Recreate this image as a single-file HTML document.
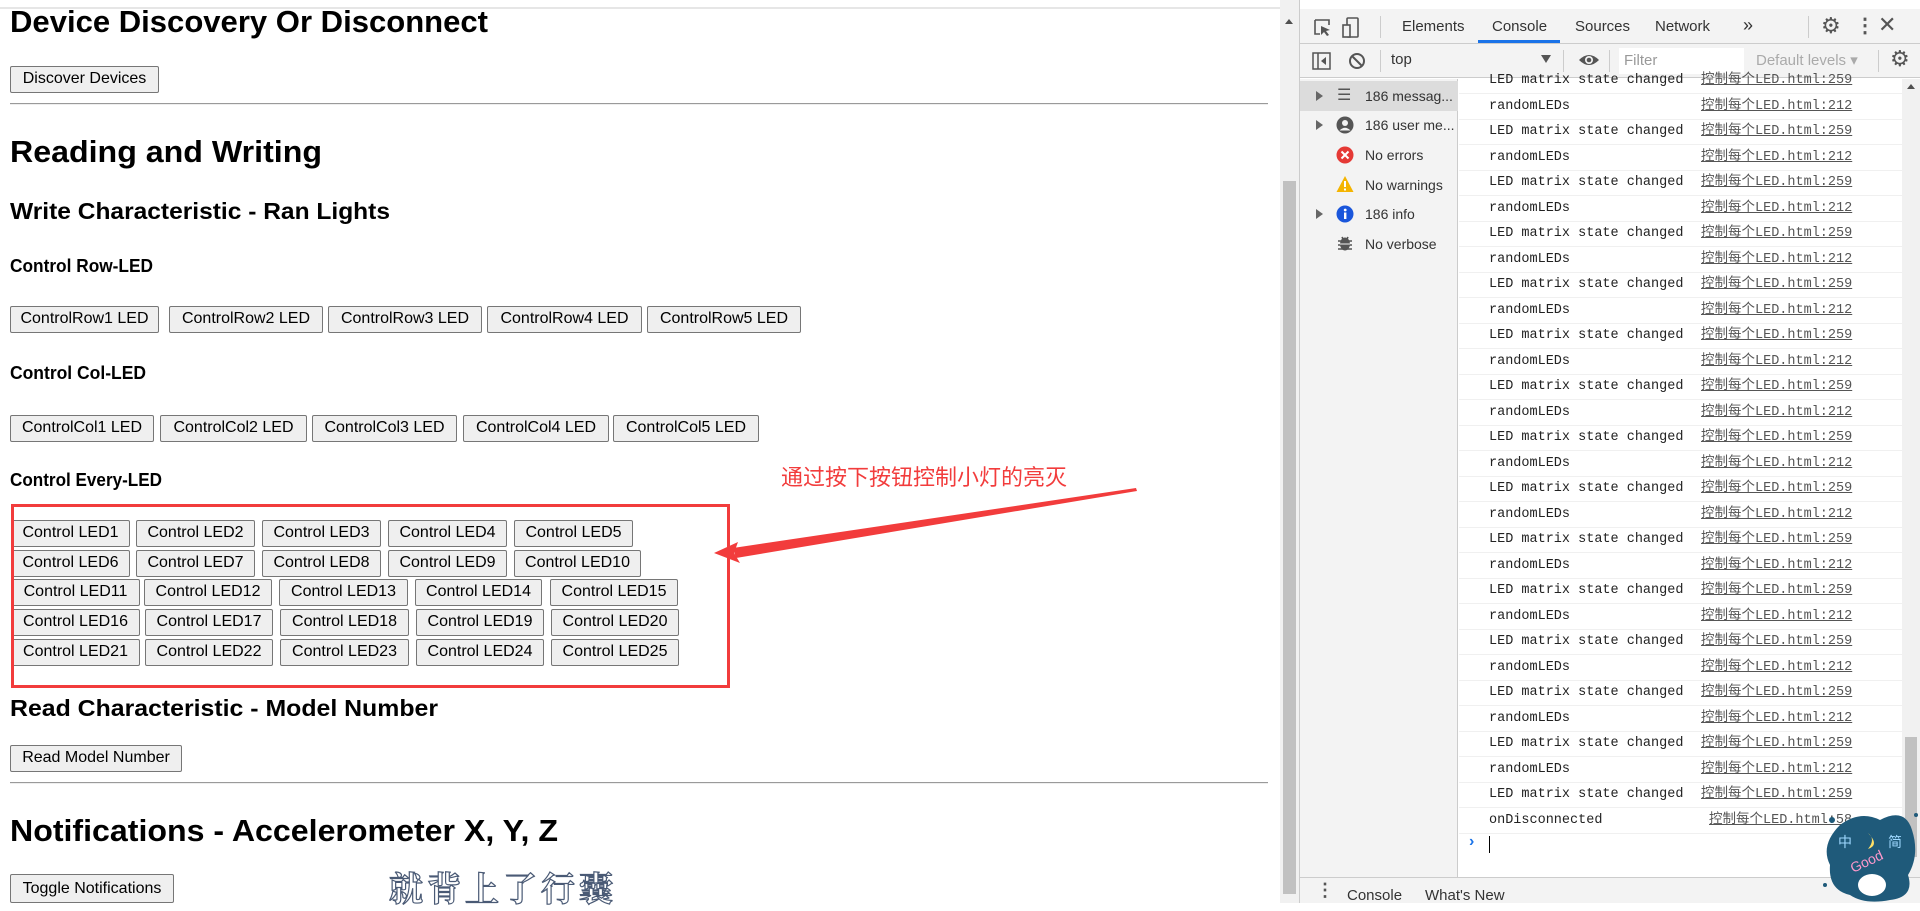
<!DOCTYPE html>
<html><head><meta charset="utf-8">
<style>
*{box-sizing:border-box;margin:0;padding:0}
body{width:1920px;height:903px;overflow:hidden;background:#fff;position:relative;font-family:"Liberation Sans",Arial,sans-serif;color:#000}
.a{position:absolute;white-space:nowrap}
.h{font-weight:bold;transform-origin:0 50%;line-height:1}
.b{position:absolute;background:#efefef;border:1px solid #767676;border-radius:2px;font-size:16px;text-align:center;line-height:24px;white-space:nowrap;overflow:hidden;color:#000}
.hr{position:absolute;left:10px;width:1258px;height:2px;background:#9a9a9a;border-bottom:1px solid #eee}
.dt{font-family:"Liberation Sans",sans-serif;font-size:15px;color:#333}
.row{position:absolute;left:1459px;width:443px;height:25.5px;border-bottom:1px solid #f0f0f0;font-family:"Liberation Mono",monospace;font-size:13.5px;color:#222;line-height:25px}
.row .m{position:absolute;left:30px;top:0}
.row .l{position:absolute;left:242px;top:0;text-decoration:underline;color:#555;font-family:"Liberation Mono","Noto Sans CJK SC",monospace}
.si{position:absolute;left:1300px;width:158px;height:30px;font-size:14px;color:#333;white-space:nowrap;overflow:hidden}
.si .t{position:absolute;left:65px;top:7px;width:90px;overflow:hidden;text-overflow:ellipsis}
.si .tri{position:absolute;left:16px;top:10px;width:0;height:0;border-left:7px solid #666;border-top:5px solid transparent;border-bottom:5px solid transparent}
</style></head><body>
<div class="a" style="left:0;top:0;width:1280px;height:9px;background:#fff;border-bottom:2px solid #e6e6e6"></div>

<div class="a h" id="t1" style="left:10px;top:6px;font-size:31px">Device Discovery Or Disconnect</div>
<div class="b" style="left:10px;top:66px;width:149px;height:27px">Discover Devices</div>
<div class="hr" style="top:103px"></div>
<div class="a h" id="t2" style="left:10px;top:136px;font-size:31px">Reading and Writing</div>
<div class="a h" id="t3" style="left:10px;top:200px;font-size:23px">Write Characteristic - Ran Lights</div>
<div class="a h" id="t4" style="left:10px;top:257px;font-size:18px">Control Row-LED</div>
<div class="b" style="left:10px;top:306px;width:149px;height:27px">ControlRow1 LED</div>
<div class="b" style="left:169px;top:306px;width:154px;height:27px">ControlRow2 LED</div>
<div class="b" style="left:328px;top:306px;width:154px;height:27px">ControlRow3 LED</div>
<div class="b" style="left:487px;top:306px;width:155px;height:27px">ControlRow4 LED</div>
<div class="b" style="left:647px;top:306px;width:154px;height:27px">ControlRow5 LED</div>
<div class="a h" id="t5" style="left:10px;top:364px;font-size:18px">Control Col-LED</div>
<div class="b" style="left:10px;top:415px;width:144px;height:27px">ControlCol1 LED</div>
<div class="b" style="left:160px;top:415px;width:147px;height:27px">ControlCol2 LED</div>
<div class="b" style="left:312px;top:415px;width:145px;height:27px">ControlCol3 LED</div>
<div class="b" style="left:463px;top:415px;width:146px;height:27px">ControlCol4 LED</div>
<div class="b" style="left:613px;top:415px;width:146px;height:27px">ControlCol5 LED</div>
<div class="a h" id="t6" style="left:10px;top:471px;font-size:18px">Control Every-LED</div>

<div class="b" style="left:11px;top:520px;width:119px;height:27px">Control LED1</div>
<div class="b" style="left:136px;top:520px;width:119px;height:27px">Control LED2</div>
<div class="b" style="left:262px;top:520px;width:119px;height:27px">Control LED3</div>
<div class="b" style="left:388px;top:520px;width:119px;height:27px">Control LED4</div>
<div class="b" style="left:514px;top:520px;width:119px;height:27px">Control LED5</div>
<div class="b" style="left:11px;top:550px;width:119px;height:27px">Control LED6</div>
<div class="b" style="left:136px;top:550px;width:119px;height:27px">Control LED7</div>
<div class="b" style="left:262px;top:550px;width:119px;height:27px">Control LED8</div>
<div class="b" style="left:388px;top:550px;width:119px;height:27px">Control LED9</div>
<div class="b" style="left:514px;top:550px;width:127px;height:27px">Control LED10</div>
<div class="b" style="left:11px;top:579px;width:129px;height:27px">Control LED11</div>
<div class="b" style="left:144px;top:579px;width:128px;height:27px">Control LED12</div>
<div class="b" style="left:279px;top:579px;width:129px;height:27px">Control LED13</div>
<div class="b" style="left:415px;top:579px;width:127px;height:27px">Control LED14</div>
<div class="b" style="left:550px;top:579px;width:128px;height:27px">Control LED15</div>
<div class="b" style="left:11px;top:609px;width:129px;height:27px">Control LED16</div>
<div class="b" style="left:145px;top:609px;width:128px;height:27px">Control LED17</div>
<div class="b" style="left:280px;top:609px;width:129px;height:27px">Control LED18</div>
<div class="b" style="left:416px;top:609px;width:128px;height:27px">Control LED19</div>
<div class="b" style="left:551px;top:609px;width:128px;height:27px">Control LED20</div>
<div class="b" style="left:11px;top:639px;width:129px;height:27px">Control LED21</div>
<div class="b" style="left:145px;top:639px;width:128px;height:27px">Control LED22</div>
<div class="b" style="left:280px;top:639px;width:129px;height:27px">Control LED23</div>
<div class="b" style="left:416px;top:639px;width:128px;height:27px">Control LED24</div>
<div class="b" style="left:551px;top:639px;width:128px;height:27px">Control LED25</div>
<div class="a" style="left:11px;top:504px;width:719px;height:184px;border:3px solid #f23c3c"></div>

<div class="a" style="left:781px;top:460px;font-size:22px;color:#f23c3c;font-family:'Liberation Sans','Noto Sans CJK SC',sans-serif">通过按下按钮控制小灯的亮灭</div>
<svg class="a" style="left:0;top:0" width="1280" height="903"><polygon points="1136,488 1137,491 736,558 733,548" fill="#f23c3c"/><polygon points="714,553 738,542 734,553 740,563" fill="#f23c3c"/></svg>

<div class="a h" id="t7" style="left:10px;top:697px;font-size:23px">Read Characteristic - Model Number</div>
<div class="b" style="left:10px;top:745px;width:172px;height:27px">Read Model Number</div>
<div class="hr" style="top:782px"></div>
<div class="a h" id="t8" style="left:10px;top:815px;font-size:31px">Notifications - Accelerometer X, Y, Z</div>
<div class="b" style="left:10px;top:874px;width:164px;height:29px;line-height:27px">Toggle Notifications</div>
<div class="a" style="left:389px;top:862px;font-size:34px;letter-spacing:4px;color:#fff;-webkit-text-stroke:1.2px #4a5a75;font-family:'Noto Serif CJK SC','Noto Sans CJK SC',serif;font-weight:bold">就背上了行囊</div>

<div class="a" style="left:1280px;top:0;width:19px;height:903px;background:#f1f1f1"></div>
<div class="a" style="left:1283px;top:181px;width:13px;height:713px;background:#c1c1c1"></div>
<div class="a" style="left:1285px;top:19px;border-left:4px solid transparent;border-right:4px solid transparent;border-bottom:5px solid #505050"></div>

<div class="a" style="left:1299px;top:0;width:621px;height:903px;background:#fff;border-left:1px solid #ccc"></div>
<div class="a" style="left:1300px;top:9px;width:620px;height:35px;background:#f3f3f3;border-bottom:1px solid #ccc"></div>
<div class="a" style="left:1300px;top:44px;width:620px;height:34px;background:#f3f3f3;border-bottom:1px solid #ccc"></div>
<svg class="a" style="left:1313px;top:17px" width="60" height="22"><path d="M2 3h14v5M2 3v14h5" fill="none" stroke="#555" stroke-width="1.6"/><path d="M8 9l9 4-4 1 3 4-2 1-3-4-3 3z" fill="#555"/><rect x="34" y="1" width="11" height="19" rx="1" fill="none" stroke="#555" stroke-width="1.6"/><rect x="30" y="8" width="7" height="12" fill="#f3f3f3" stroke="#555" stroke-width="1.6"/></svg>
<div class="a" style="left:1380px;top:16px;width:1px;height:22px;background:#ccc"></div>
<div class="a dt" style="left:1402px;top:18px">Elements</div>
<div class="a dt" style="left:1492px;top:18px">Console</div>
<div class="a" style="left:1478px;top:40px;width:82px;height:3px;background:#1a73e8"></div>
<div class="a dt" style="left:1575px;top:18px">Sources</div>
<div class="a dt" style="left:1655px;top:18px">Network</div>
<div class="a dt" style="left:1743px;top:15px;font-size:18px">»</div>
<div class="a" style="left:1808px;top:16px;width:1px;height:22px;background:#ccc"></div>
<div class="a" style="left:1821px;top:13px;font-size:22px;color:#555">⚙</div>
<div class="a" style="left:1855px;top:13px;font-size:20px;color:#555;font-weight:bold">⋮</div>
<div class="a" style="left:1878px;top:12px;font-size:22px;color:#555">✕</div>

<svg class="a" style="left:1312px;top:50px" width="70" height="22"><rect x="1" y="3" width="17" height="16" fill="none" stroke="#555" stroke-width="1.5"/><line x1="6" y1="3" x2="6" y2="19" stroke="#555" stroke-width="1.5"/><path d="M14 7v8l-5-4z" fill="#555"/><circle cx="45" cy="11" r="7" fill="none" stroke="#555" stroke-width="2"/><line x1="40" y1="6" x2="50" y2="16" stroke="#555" stroke-width="2"/></svg>
<div class="a" style="left:1380px;top:50px;width:1px;height:22px;background:#ccc"></div>
<div class="a dt" style="left:1391px;top:51px">top</div>
<div class="a" style="left:1541px;top:55px;border-left:5px solid transparent;border-right:5px solid transparent;border-top:8px solid #555"></div>
<div class="a" style="left:1563px;top:50px;width:1px;height:22px;background:#ccc"></div>
<svg class="a" style="left:1578px;top:52px" width="22" height="16"><path d="M1 8Q11 -2 21 8Q11 18 1 8z" fill="#555"/><circle cx="11" cy="8" r="4" fill="#f3f3f3"/><circle cx="11" cy="8" r="2.3" fill="#555"/></svg>
<div class="a" style="left:1609px;top:50px;width:1px;height:22px;background:#ccc"></div>
<div class="a" style="left:1619px;top:48px;width:125px;height:26px;background:#fff"></div>
<div class="a dt" style="left:1624px;top:52px;color:#999">Filter</div>
<div class="a dt" style="left:1756px;top:51px;color:#aaa">Default levels ▾</div>
<div class="a" style="left:1878px;top:50px;width:1px;height:22px;background:#ccc"></div>
<div class="a" style="left:1890px;top:46px;font-size:22px;color:#555">⚙</div>

<div class="a" style="left:1300px;top:79px;width:158px;height:798px;background:#f3f3f3;border-right:1px solid #ccc"></div>
<div class="si" style="top:81px;background:#dcdcdc"><span class="tri"></span><span class="a" style="left:37px;top:4px;font-size:16px;color:#555">☰</span><span class="t">186 messag...</span></div>
<div class="si" style="top:110px"><span class="tri"></span><svg class="a" style="left:36px;top:6px" width="18" height="18"><circle cx="9" cy="9" r="8.5" fill="#555"/><circle cx="9" cy="7" r="3" fill="#f3f3f3"/><path d="M3.5 14.5Q9 9 14.5 14.5" fill="#f3f3f3"/></svg><span class="t">186 user me...</span></div>
<div class="si" style="top:140px"><svg class="a" style="left:36px;top:6px" width="18" height="18"><circle cx="9" cy="9" r="8.5" fill="#e53935"/><path d="M5.5 5.5l7 7M12.5 5.5l-7 7" stroke="#fff" stroke-width="2"/></svg><span class="t">No errors</span></div>
<div class="si" style="top:170px"><svg class="a" style="left:36px;top:5px" width="18" height="18"><path d="M9 1L17.5 17H.5z" fill="#f4b400"/><rect x="8" y="6" width="2" height="6" fill="#fff"/><rect x="8" y="13.5" width="2" height="2" fill="#fff"/></svg><span class="t">No warnings</span></div>
<div class="si" style="top:199px"><span class="tri"></span><svg class="a" style="left:36px;top:6px" width="18" height="18"><circle cx="9" cy="9" r="8.5" fill="#1a56db"/><rect x="8" y="7.5" width="2.4" height="6.5" fill="#fff"/><circle cx="9.2" cy="5" r="1.4" fill="#fff"/></svg><span class="t">186 info</span></div>
<div class="si" style="top:229px"><svg class="a" style="left:36px;top:5px" width="18" height="18"><ellipse cx="9" cy="10" rx="5" ry="6.5" fill="#555"/><path d="M2 7h14M2 11h14M2 15h14M6 3l1 2M12 3l-1 2" stroke="#555" stroke-width="1.6"/><line x1="4" y1="10" x2="14" y2="10" stroke="#f3f3f3" stroke-width="1"/></svg><span class="t">No verbose</span></div>

<div class="row" style="top:68px"><span class="m">LED matrix state changed</span><span class="l">控制每个LED.html:259</span></div>
<div class="row" style="top:94px"><span class="m">randomLEDs</span><span class="l">控制每个LED.html:212</span></div>
<div class="row" style="top:119px"><span class="m">LED matrix state changed</span><span class="l">控制每个LED.html:259</span></div>
<div class="row" style="top:145px"><span class="m">randomLEDs</span><span class="l">控制每个LED.html:212</span></div>
<div class="row" style="top:170px"><span class="m">LED matrix state changed</span><span class="l">控制每个LED.html:259</span></div>
<div class="row" style="top:196px"><span class="m">randomLEDs</span><span class="l">控制每个LED.html:212</span></div>
<div class="row" style="top:221px"><span class="m">LED matrix state changed</span><span class="l">控制每个LED.html:259</span></div>
<div class="row" style="top:247px"><span class="m">randomLEDs</span><span class="l">控制每个LED.html:212</span></div>
<div class="row" style="top:272px"><span class="m">LED matrix state changed</span><span class="l">控制每个LED.html:259</span></div>
<div class="row" style="top:298px"><span class="m">randomLEDs</span><span class="l">控制每个LED.html:212</span></div>
<div class="row" style="top:323px"><span class="m">LED matrix state changed</span><span class="l">控制每个LED.html:259</span></div>
<div class="row" style="top:349px"><span class="m">randomLEDs</span><span class="l">控制每个LED.html:212</span></div>
<div class="row" style="top:374px"><span class="m">LED matrix state changed</span><span class="l">控制每个LED.html:259</span></div>
<div class="row" style="top:400px"><span class="m">randomLEDs</span><span class="l">控制每个LED.html:212</span></div>
<div class="row" style="top:425px"><span class="m">LED matrix state changed</span><span class="l">控制每个LED.html:259</span></div>
<div class="row" style="top:451px"><span class="m">randomLEDs</span><span class="l">控制每个LED.html:212</span></div>
<div class="row" style="top:476px"><span class="m">LED matrix state changed</span><span class="l">控制每个LED.html:259</span></div>
<div class="row" style="top:502px"><span class="m">randomLEDs</span><span class="l">控制每个LED.html:212</span></div>
<div class="row" style="top:527px"><span class="m">LED matrix state changed</span><span class="l">控制每个LED.html:259</span></div>
<div class="row" style="top:553px"><span class="m">randomLEDs</span><span class="l">控制每个LED.html:212</span></div>
<div class="row" style="top:578px"><span class="m">LED matrix state changed</span><span class="l">控制每个LED.html:259</span></div>
<div class="row" style="top:604px"><span class="m">randomLEDs</span><span class="l">控制每个LED.html:212</span></div>
<div class="row" style="top:629px"><span class="m">LED matrix state changed</span><span class="l">控制每个LED.html:259</span></div>
<div class="row" style="top:655px"><span class="m">randomLEDs</span><span class="l">控制每个LED.html:212</span></div>
<div class="row" style="top:680px"><span class="m">LED matrix state changed</span><span class="l">控制每个LED.html:259</span></div>
<div class="row" style="top:706px"><span class="m">randomLEDs</span><span class="l">控制每个LED.html:212</span></div>
<div class="row" style="top:731px"><span class="m">LED matrix state changed</span><span class="l">控制每个LED.html:259</span></div>
<div class="row" style="top:757px"><span class="m">randomLEDs</span><span class="l">控制每个LED.html:212</span></div>
<div class="row" style="top:782px"><span class="m">LED matrix state changed</span><span class="l">控制每个LED.html:259</span></div>
<div class="row" style="top:808px"><span class="m">onDisconnected</span><span class="l" style="left:250px">控制每个LED.html:58</span></div>
<div class="a" style="left:1469px;top:833px;color:#1a73e8;font-size:16px;font-weight:bold">›</div>
<div class="a" style="left:1489px;top:836px;width:1px;height:17px;background:#000"></div>

<div class="a" style="left:1902px;top:79px;width:18px;height:798px;background:#f1f1f1"></div>
<div class="a" style="left:1905px;top:737px;width:12px;height:120px;background:#c1c1c1"></div>
<div class="a" style="left:1907px;top:84px;border-left:4px solid transparent;border-right:4px solid transparent;border-bottom:5px solid #505050"></div>

<div class="a" style="left:1300px;top:877px;width:620px;height:26px;background:#f3f3f3;border-top:1px solid #ccc"></div>
<div class="a" style="left:1316px;top:880px;font-size:18px;color:#555;font-weight:bold">⋮</div>
<div class="a dt" style="left:1347px;top:887px">Console</div>
<div class="a dt" style="left:1425px;top:887px">What's New</div>

<svg class="a" style="left:1820px;top:805px" width="100" height="98"><path d="M20 20Q40 5 60 15Q85 2 92 25Q100 50 88 70Q95 92 70 95Q45 100 30 90Q8 85 10 60Q0 40 20 20z" fill="#1f5a7a"/><circle cx="12" cy="15" r="3" fill="#1f5a7a"/><circle cx="96" cy="10" r="2" fill="#1f5a7a"/><circle cx="5" cy="80" r="2" fill="#1f5a7a"/><ellipse cx="52" cy="80" rx="14" ry="11" fill="#fff"/><text x="18" y="42" font-size="14" fill="#9fd8ff" font-family="Noto Sans CJK SC">中</text><text x="68" y="42" font-size="14" fill="#9fd8ff" font-family="Noto Sans CJK SC">简</text><text x="30" y="62" font-size="14" fill="#f9c" font-family="Liberation Sans" transform="rotate(-25 45 58)">Good</text><path d="M48 28q8 6 0 16q12-4 0-16z" fill="#ffe066"/></svg>

<script>
var fit=[["t1",478],["t2",312],["t3",380],["t4",143],["t5",136],["t6",152],["t7",428],["t8",548]];
fit.forEach(function(f){var e=document.getElementById(f[0]);var w=e.getBoundingClientRect().width;if(w>0)e.style.transform="scaleX("+(f[1]/w)+")";});
</script>
</body></html>
